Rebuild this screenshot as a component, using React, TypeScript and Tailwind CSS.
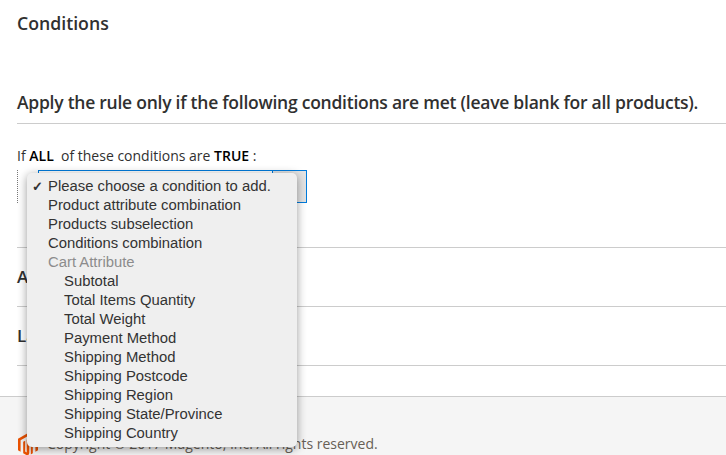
const topOptions = ["Product attribute combination", "Products subselection", "Conditions combination"]

const cartOptions = [
  "Subtotal",
  "Total Items Quantity",
  "Total Weight",
  "Payment Method",
  "Shipping Method",
  "Shipping Postcode",
  "Shipping Region",
  "Shipping State/Province",
  "Shipping Country",
]

const MagentoLogo = () => (
  <svg width="20" height="23" viewBox="0 0 20 23" className="shrink-0">
    <path
      d="M10 0 L20 5.8 V17.2 L17.4 18.7 V7.3 L10 3 L2.6 7.3 V18.7 L0 17.2 V5.8 Z M8.7 6.8 L11.3 5.3 V20.2 L10 23 L5.2 20.2 V8.8 L7.2 7.7 V18.6 L8.7 19.5 Z M12.8 7.7 L14.8 8.8 V20.2 L12.8 21.4 Z"
      fill="#eb5202"
    />
  </svg>
)

const Section = ({ title }: { title: string }) => (
  <div className="h-[59px] border-t border-[#cccccc] flex items-center">
    <span className="text-[17px] font-semibold text-[#303030]">{title}</span>
  </div>
)

export default function App() {
  return (
    <div className="relative w-[726px] h-[455px] overflow-hidden bg-white font-['Open_Sans',sans-serif] text-[#303030]">
      <div className="pl-[17px] pt-[13px]">
        <h2 className="text-[17.7px] leading-[20px] font-semibold">Conditions</h2>
        <h3 className="mt-[57px] text-[17.5px] leading-[24px] font-semibold tracking-[-0.25px] whitespace-nowrap">
          Apply the rule only if the following conditions are met (leave blank for all products).
        </h3>
        <div className="mt-[9px] border-t border-[#cccccc]" />
        <p className="mt-[22px] text-[14px] leading-[20px]">
          If <b className="font-semibold text-black">ALL</b>&nbsp; of these conditions are{" "}
          <b className="font-semibold text-black">TRUE</b> :
        </p>
        <div className="mt-[4px] h-[33px] flex">
          <div className="h-full border-l border-dotted border-[#777777]" />
          <div className="ml-[20px] w-[269px] h-full border border-[#007bdb] flex justify-end">
            <div className="w-[34px] border-l border-[#007bdb] bg-[#e3e3e3]" />
          </div>
        </div>
        <div className="mt-[44px]">
          <Section title="Actions" />
          <Section title="Labels" />
          <div className="border-t border-[#cccccc]" />
        </div>
      </div>
      <div className="mt-[30px] h-[60px] border-t border-[#cccccc] bg-[#f5f5f5] pl-[18px] pt-[36px] flex items-start gap-[9px]">
        <MagentoLogo />
        <span className="mt-[1px] text-[14px] leading-[20px] text-[#676056]">
          Copyright © 2017 Magento, Inc. All rights reserved.
        </span>
      </div>

      {/* native select popup */}
      <div className="absolute left-[27px] top-[173px] w-[270px] h-[274px] rounded-[5px] bg-[#efefef] pt-[4px] font-['Liberation_Sans',sans-serif] text-[14.85px] leading-[19px] text-[#333333] shadow-[0_2px_10px_rgba(0,0,0,0.4)]">
        <div className="relative pl-[21px]">
          <span className="absolute left-[5px] text-[13px] font-bold">✓</span>
          Please choose a condition to add.
        </div>
        {topOptions.map((option) => (
          <div key={option} className="pl-[21px]">
            {option}
          </div>
        ))}
        <div className="pl-[21px] text-[#8c8c8c]">Cart Attribute</div>
        {cartOptions.map((option) => (
          <div key={option} className="pl-[37px]">
            {option}
          </div>
        ))}
      </div>
    </div>
  )
}
